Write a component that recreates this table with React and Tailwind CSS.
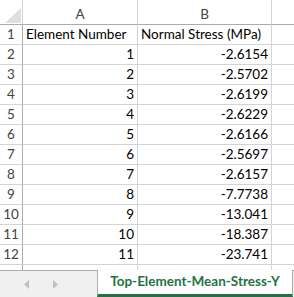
import React from 'react';

const rows = [
    [1, '-2.6154'],
    [2, '-2.5702'],
    [3, '-2.6199'],
    [4, '-2.6229'],
    [5, '-2.6166'],
    [6, '-2.5697'],
    [7, '-2.6157'],
    [8, '-7.7738'],
    [9, '-13.041'],
    [10, '-18.387'],
    [11, '-23.741'],
];

const font = { fontFamily: 'Lato, "Liberation Sans", sans-serif' };

const Row = ({ n, a, b, left = false }) => (
    <div className="flex h-[20px] shrink-0">
        <div className="w-[23px] shrink-0 border-solid border-r border-b border-r-[#ababab] border-b-[#d4d4d4] flex items-center justify-center text-[#444] text-[13.5px] leading-none pt-[1px]">{n}</div>
        <div className={`w-[115px] shrink-0 border-solid border-r border-b border-[#d4d4d4] flex items-center px-[3px] pt-[1px] text-black text-[13.5px] leading-none whitespace-nowrap ${left ? 'justify-start' : 'justify-end'}`}>{a}</div>
        <div className={`w-[134px] shrink-0 border-solid border-r border-b border-[#d4d4d4] flex items-center px-[3px] pt-[1px] text-black text-[13.5px] leading-none whitespace-nowrap ${left ? 'justify-start' : 'justify-end'}`}>{b}</div>
        <div className="flex-1 border-solid border-b border-[#d4d4d4]" />
    </div>
);

export default function App() {
    return (
        <div className="w-[294px] h-[297px] overflow-hidden bg-white flex flex-col" style={font}>
            <div className="h-[5px] shrink-0 flex">
                <div className="w-[23px] border-solid border-r border-[#d4d4d4]" />
                <div className="w-[115px] border-solid border-r border-[#d4d4d4]" />
                <div className="w-[134px] border-solid border-r border-[#d4d4d4]" />
            </div>
            <div className="flex h-[20px] shrink-0">
                <div className="w-[23px] shrink-0 border-solid border-r border-b border-r-[#d4d4d4] border-b-[#ababab] relative">
                    <svg width="16" height="15" className="absolute left-[5px] top-[3px]">
                        <polygon points="16,0 16,15 0,15" fill="#dfdfdf" />
                    </svg>
                </div>
                <div className="w-[115px] shrink-0 border-solid border-r border-b border-r-[#d4d4d4] border-b-[#ababab] flex items-center justify-center text-[#444] text-[13.5px] leading-none">A</div>
                <div className="w-[134px] shrink-0 border-solid border-r border-b border-r-[#d4d4d4] border-b-[#ababab] flex items-center justify-center text-[#444] text-[13.5px] leading-none">B</div>
                <div className="flex-1 border-solid border-b border-[#ababab]" />
            </div>
            <Row n={1} a="Element Number" b="Normal Stress (MPa)" left />
            {rows.map(([a, b], i) => (
                <Row key={i} n={i + 2} a={a} b={b} />
            ))}
            <div className="h-[5px] shrink-0 flex">
                <div className="w-[23px] border-solid border-r border-[#ababab]" />
                <div className="w-[115px] border-solid border-r border-[#d4d4d4]" />
                <div className="w-[134px] border-solid border-r border-[#d4d4d4]" />
            </div>
            <div className="flex-1 flex bg-[#f0f0f0]">
                <div className="w-[97px] shrink-0 border-solid border-t border-[#ababab] flex items-center gap-[24px] pl-[24px] pt-[1px]">
                    <svg width="5" height="9"><polygon points="5,0 5,9 0,4.5" fill="#c0c0c0" /></svg>
                    <svg width="5" height="9"><polygon points="0,0 0,9 5,4.5" fill="#c0c0c0" /></svg>
                </div>
                <div className="w-[196px] shrink-0 bg-white border-solid border-x border-[#ababab] border-b-[3px] border-b-[#217346] flex items-center justify-center text-[#217346] font-bold text-[13.5px] leading-none whitespace-nowrap">
                    Top-Element-Mean-Stress-Y
                </div>
                <div className="flex-1 border-solid border-t border-[#ababab]" />
            </div>
        </div>
    );
}
